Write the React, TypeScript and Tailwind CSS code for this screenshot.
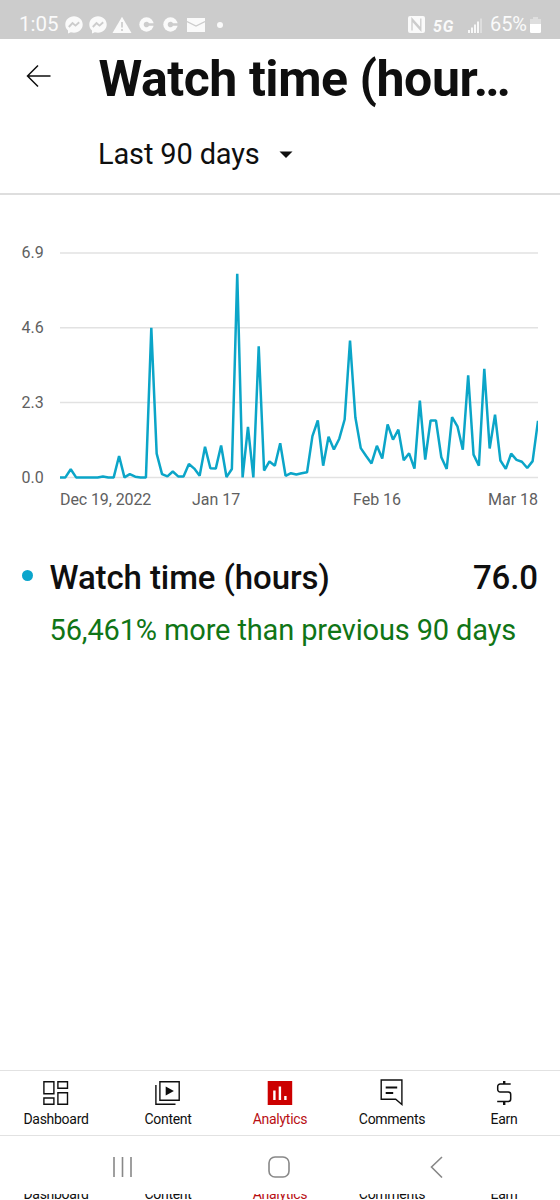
import { ReactNode } from 'react'

const watchTime = [
  0, 0, 0.25, 0, 0, 0, 0, 0, 0.03, 0, 0, 0.66, 0, 0.1, 0.02, 0, 0, 4.6,
  0.73, 0.1, 0.03, 0.18, 0.03, 0.03, 0.41, 0.27, 0.05, 0.94, 0.28, 0.27, 0.98, 0.01, 0.26, 6.26, 0, 1.55,
  0, 4.03, 0.21, 0.49, 0.36, 1.05, 0.05, 0.13, 0.09, 0.13, 0.16, 1.27, 1.75, 0.36, 1.25, 0.86, 1.19, 1.78,
  4.21, 1.84, 0.9, 0.66, 0.43, 0.97, 0.58, 1.63, 1.16, 1.47, 0.53, 0.74, 0.27, 2.36, 0.55, 1.75, 1.75, 0.62,
  0.26, 1.85, 1.57, 0.85, 3.14, 0.7, 0.36, 3.34, 0.89, 1.93, 0.52, 0.26, 0.73, 0.54, 0.48, 0.29, 0.5, 1.74,
]

const MAX_HOURS = 6.9
const PLOT_WIDTH = 478
const PLOT_HEIGHT = 224.4

const yTicks = ['6.9', '4.6', '2.3', '0.0']

function MessengerIcon() {
  return (
    <svg width="18" height="18" viewBox="0 0 18 18">
      <path d="M9 .3C4 .3.3 3.9.3 8.5c0 2.500 1 4.600 2.700 6.100V17.500l2.800-1.300c1 .3 2.100.5 3.200.5 5 0 8.700-3.600 8.700-8.200S14 .3 9 .3z" fill="#fafafa" />
      <path d="M3.800 11 7.500 7l3 2.600L14.200 6.300" fill="none" stroke="#ccc" strokeWidth="1.900" />
    </svg>
  )
}

function CoinIcon() {
  return (
    <svg width="15" height="15" viewBox="0 0 15 15">
      <circle cx="7.500" cy="7.500" r="7.200" fill="#fafafa" />
      <path d="M10 6.200h5v2.600h-5a2.800 2.800 0 1 1 0-2.600z" fill="#ccc" />
    </svg>
  )
}

function StatusBar() {
  return (
    <div className="relative flex h-[39px] items-start bg-[#ccc] pl-[19px] pt-[15px] text-[#fafafa]">
      <span className="w-[46px] text-[20.500px] leading-[19px]">1:05</span>
      <div className="flex h-[19px] items-center">
        <MessengerIcon />
        <span className="ml-[6px] flex"><MessengerIcon /></span>
        <svg className="ml-[5px]" width="20" height="18" viewBox="0 0 20 18">
          <path d="M10 .8 19.500 17H.5z" fill="#fafafa" />
          <path d="M10 6v5.500M10 13v2" stroke="#ccc" strokeWidth="1.700" />
        </svg>
        <span className="ml-[7px] flex"><CoinIcon /></span>
        <span className="ml-[9px] flex"><CoinIcon /></span>
        <svg className="ml-[9px]" width="18" height="14" viewBox="0 0 18 14">
          <path d="M0 0h18v14H0z" fill="#fafafa" />
          <path d="M0 3.500 9 8l9-4.500" fill="none" stroke="#ccc" strokeWidth="1.300" />
        </svg>
        <span className="ml-[12px] h-[6px] w-[6px] rounded-full bg-[#fafafa]" />
      </div>
      <div className="ml-auto mr-[19px] flex h-[19px] items-center">
        <svg width="17" height="17" viewBox="0 0 17 17">
          <rect width="17" height="17" rx="2" fill="#fafafa" />
          <path d="M4 14.500V2.800L12.300 12M12.800 2.500v11.700L4.500 5" fill="none" stroke="#ccc" strokeWidth="1.300" />
        </svg>
        <span className="ml-[8px] mt-[4px] w-[23px] text-[16px] font-bold italic leading-[15px] tracking-[0.8px]">5G</span>
        <svg className="ml-[12px] mt-px" width="15" height="15" viewBox="0 0 15 15">
          <path d="M1 15v-3M4 15V9.500M7 15V6.500M10 15V3.500" stroke="#fafafa" strokeWidth="1.900" />
          <path d="M13 15V.5" stroke="#e2e2e2" strokeWidth="1.600" />
        </svg>
        <span className="ml-[7px] w-[38px] text-[20px] leading-[19px] tracking-[-0.1px]">65%</span>
        <svg className="ml-[2px]" width="11" height="16" viewBox="0 0 11 16">
          <path d="M3 0h5v2h3v6H0V2h3z" fill="#dedede" />
          <path d="M0 7h11v7.500a1.500 1.500 0 0 1-1.500 1.500h-8A1.500 1.500 0 0 1 0 14.500z" fill="#fff" />
        </svg>
      </div>
    </div>
  )
}

function Header() {
  return (
    <header className="h-[156px] border-b-2 border-[#dedede]">
      <div className="flex h-[80px] items-center">
        <svg className="ml-[26px] -mt-[6px]" width="26" height="24" viewBox="0 0 26 24">
          <path d="M24.500 12H1.500M12 1.500 1.500 12 12 22.500" fill="none" stroke="#0f0f0f" strokeWidth="1.500" />
        </svg>
        <h1 className="ml-[46.500px] whitespace-nowrap text-[50px] font-bold leading-[60px] tracking-[-0.45px]">Watch time (hour…</h1>
      </div>
      <div className="flex h-[70px] items-center pl-[98px]">
        <span className="w-[181px] whitespace-nowrap text-[29px] leading-[32px] tracking-[-0.15px]">Last 90 days</span>
        <svg className="mt-px" width="14" height="8" viewBox="0 0 14 8">
          <path d="M.5.5h13L7 7z" fill="#0f0f0f" />
        </svg>
      </div>
    </header>
  )
}

function WatchTimeChart() {
  const points = watchTime
    .map((v, i) => `${(i * PLOT_WIDTH) / (watchTime.length - 1)},${PLOT_HEIGHT * (1 - v / MAX_HOURS) + 10}`)
    .join(' ')

  return (
    <section className="pt-[48px] text-[16px] text-[#606060]">
      <div className="flex">
        <div className="flex h-[245px] w-[60px] flex-col justify-between pl-[21.500px]">
          {yTicks.map((tick) => (
            <span key={tick} className="leading-[20px]">{tick}</span>
          ))}
        </div>
        <svg width="478" height="245" viewBox="0 0 478 245">
          {yTicks.map((tick, i) => (
            <path key={tick} d={`M0 ${10 + (i * PLOT_HEIGHT) / 3}h478`} stroke="#e2e2e2" strokeWidth="1.500" />
          ))}
          <polyline points={points} fill="none" stroke="#0ba5c8" strokeWidth="2.500" strokeLinejoin="bevel" />
        </svg>
      </div>
      <div className="flex h-[24px] pl-[60px] leading-[24px]">
        <span className="w-[132px] tracking-[-0.1px]">Dec 19, 2022</span>
        <span className="w-[161px]">Jan 17</span>
        <span>Feb 16</span>
        <span className="ml-auto mr-[22px]">Mar 18</span>
      </div>
    </section>
  )
}

function Summary() {
  return (
    <section className="mt-[46px] pl-[49.500px] pr-[22px]">
      <div className="relative flex h-[40px] items-center justify-between text-[33px] font-medium tracking-[-0.1px]">
        <span className="absolute -left-[28px] top-[12px] h-[11px] w-[11px] rounded-full bg-[#0ba5cc]" />
        <span>Watch time (hours)</span>
        <span>76.0</span>
      </div>
      <p className="mt-[12px] whitespace-nowrap text-[29px] leading-[40px] tracking-[-0.14px] text-[#107516]">56,461% more than previous 90 days</p>
    </section>
  )
}

const tabs: { label: string; icon: ReactNode; active?: boolean }[] = [
  {
    label: 'Dashboard',
    icon: <path d="M2.700 2.700h10v12h-10zM16.700 2.700h9.600v6.600h-9.600zM16.700 13.700h9.600v11.600h-9.600zM2.700 19h10v6.300h-10z" fill="none" stroke="#0f0f0f" strokeWidth="1.400" />,
  },
  {
    label: 'Content',
    icon: (
      <>
        <path d="M6.700 2.700h19.300v18.600H6.700zM2.700 6v19.300h19.600" fill="none" stroke="#0f0f0f" strokeWidth="1.400" />
        <path d="M12.500 7.500 20.700 12l-8.200 4.500z" fill="#0f0f0f" />
      </>
    ),
  },
  {
    label: 'Analytics',
    active: true,
    icon: (
      <>
        <path d="M2.500 2h24.500v24h-24.500z" fill="#c00" />
        <path d="M9.200 21V11.500M14.700 21V7.500M20.200 21v-4" stroke="#fff" strokeWidth="2.400" />
      </>
    ),
  },
  {
    label: 'Comments',
    icon: (
      <>
        <path d="M4 1h20.700v24.500l-6.200-5.200H4z" fill="none" stroke="#0f0f0f" strokeWidth="1.400" />
        <path d="M8.500 8.500h11.500M8.500 14h7.500" stroke="#0f0f0f" strokeWidth="2" />
      </>
    ),
  },
  {
    label: 'Earn',
    icon: (
      <>
        <path d="M21.500 5H11a2.500 2.500 0 0 0-2.500 2.500v3A2.500 2.500 0 0 0 11 13h8a2.500 2.500 0 0 1 2.500 2.500v4.500A2.500 2.500 0 0 1 19 22.500H8" fill="none" stroke="#0f0f0f" strokeWidth="1.500" />
        <path d="M15 2v3M15 23v3" stroke="#0f0f0f" strokeWidth="2.400" />
      </>
    ),
  },
]

function TabLabels() {
  return (
    <div className="grid grid-cols-5 text-center text-[14px] leading-[18px] tracking-[-0.28px]">
      {tabs.map((tab) => (
        <span key={tab.label} className={tab.active ? 'text-[#b80f14]' : ''}>{tab.label}</span>
      ))}
    </div>
  )
}

function BottomNav() {
  return (
    <nav className="h-[66px] border-y-[1.500px] border-[#e2e2e2] pt-[8px]">
      <div className="mb-[3px] grid grid-cols-5">
        {tabs.map((tab) => (
          <svg key={tab.label} className="mx-auto" width="29" height="28" viewBox="0.8 0 29 28">{tab.icon}</svg>
        ))}
      </div>
      <TabLabels />
    </nav>
  )
}

function SystemNav() {
  return (
    <div className="flex h-[58px] items-center pl-[112px] pt-[4px]">
      <svg width="22" height="22" viewBox="0 0 22 22">
        <path d="M2 1v20M10.500 1v20M19 1v20" stroke="#888" strokeWidth="1.600" />
      </svg>
      <svg className="ml-[134px]" width="22" height="22" viewBox="0 0 22 22">
        <rect x="1" y="1" width="20" height="20" rx="6" fill="none" stroke="#888" strokeWidth="1.600" />
      </svg>
      <svg className="ml-[140px]" width="14" height="22" viewBox="0 0 14 22">
        <path d="M12 1 1.500 11 12 21.500" fill="none" stroke="#888" strokeWidth="1.600" />
      </svg>
    </div>
  )
}

export default function App() {
  return (
    <div className="flex h-[1200px] w-[560px] flex-col overflow-hidden bg-white font-['Roboto',sans-serif] text-[#0f0f0f]">
      <StatusBar />
      <Header />
      <WatchTimeChart />
      <Summary />
      <div className="mt-auto">
        <BottomNav />
        <SystemNav />
        {/* lower edge of the tab labels repeats under the system bar */}
        <div className="flex h-[6px] flex-col overflow-hidden">
          <div className="-mt-[9px]">
            <TabLabels />
          </div>
        </div>
      </div>
    </div>
  )
}
